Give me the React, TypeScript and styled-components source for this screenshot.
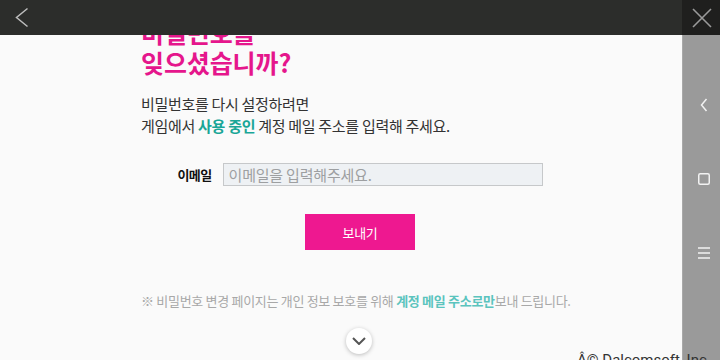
import React from "react";
import styled, { createGlobalStyle } from "styled-components";

const GlobalStyle = createGlobalStyle`
  html, body {
    margin: 0;
    padding: 0;
    overflow: hidden;
    background: #fafafa;
  }
  body {
    font-family: Roboto, "Noto Sans CJK KR", sans-serif;
  }
`;

const App: React.FC = () => {
  return (
    <Screen>
      <GlobalStyle />
      <TopBar>
        <IconButton aria-label="back">
          <svg width="14" height="22" viewBox="0 0 14 22">
            <path d="M12.5 1.5 L1.5 10.5 L12.5 19.5" fill="none" stroke="#bdbdbd" strokeWidth="1.5" />
          </svg>
        </IconButton>
      </TopBar>
      <CloseBox>
        <svg width="20" height="20" viewBox="0 0 20 20">
          <path d="M1 1 L19 19 M19 1 L1 19" fill="none" stroke="#9a9a9a" strokeWidth="1.6" />
        </svg>
      </CloseBox>
      <SideNav>
        <NavKey>
          <svg width="8" height="14" viewBox="0 0 8 14">
            <path d="M6.5 1 L1.5 7 L6.5 13" fill="none" stroke="#f2f2f2" strokeWidth="1.5" />
          </svg>
        </NavKey>
        <NavKey>
          <svg width="12" height="12" viewBox="0 0 12 12">
            <rect x="0.75" y="0.75" width="10.5" height="10.5" rx="1.5" fill="none" stroke="#f2f2f2" strokeWidth="1.5" />
          </svg>
        </NavKey>
        <NavKey>
          <svg width="12" height="12" viewBox="0 0 12 12">
            <path d="M0 1 H12 M0 6 H12 M0 11 H12" fill="none" stroke="#f2f2f2" strokeWidth="1.3" />
          </svg>
        </NavKey>
      </SideNav>
      <Content>
        <Scroller>
          <Panel>
            <Title>
              비밀번호를
              <br />
              잊으셨습니까?
            </Title>
            <Lead>
              비밀번호를 다시 설정하려면
              <br />
              게임에서 <Accent>사용 중인</Accent> 계정 메일 주소를 입력해 주세요.
            </Lead>
            <FieldRow>
              <Label htmlFor="email">이메일</Label>
              <Input id="email" type="email" placeholder="이메일을 입력해주세요." />
            </FieldRow>
            <SendButton>보내기</SendButton>
            <Notice>
              ※ 비밀번호 변경 페이지는 개인 정보 보호를 위해 <NoticeAccent>계정 메일 주소로만</NoticeAccent>보내 드립니다.
            </Notice>
          </Panel>
          <Footer>Â© Dalcomsoft, Inc.</Footer>
        </Scroller>
      </Content>
      <ScrollDown aria-label="scroll down">
        <svg width="14" height="8" viewBox="0 0 14 8">
          <path d="M1 1 L7 7 L13 1" fill="none" stroke="#555" strokeWidth="2" />
        </svg>
      </ScrollDown>
    </Screen>
  );
};

export default App;

const Screen = styled.div`
  width: 720px;
  height: 360px;
  display: grid;
  grid-template-columns: 682px 38px;
  grid-template-rows: 35px 325px;
  background: #fafafa;
`;

const TopBar = styled.header`
  grid-column: 1;
  grid-row: 1;
  background: #2c2d2b;
  display: flex;
  align-items: center;
  padding-left: 15px;
  z-index: 2;
`;

const IconButton = styled.button`
  background: none;
  border: none;
  padding: 0;
  display: flex;
  cursor: pointer;
`;

const CloseBox = styled.div`
  grid-column: 2;
  grid-row: 1;
  background: #1f1f1e;
  display: flex;
  align-items: center;
  justify-content: center;
  padding-left: 1px;
  z-index: 2;
`;

const SideNav = styled.nav`
  grid-column: 2;
  grid-row: 2;
  background: #9a9a9a;
  border-left: 1px solid #a9a9a9;
  display: flex;
  flex-direction: column;
  align-items: center;
  padding-top: 63px;
  gap: 60px;
`;

const NavKey = styled.div`
  width: 14px;
  height: 14px;
  display: flex;
  align-items: center;
  justify-content: center;
  padding-left: 4px;
`;

const Content = styled.main`
  grid-column: 1;
  grid-row: 2;
  overflow-y: clip;
  overflow-x: visible;
`;

const Scroller = styled.div`
  margin-top: -18px;
`;

const Panel = styled.section`
  width: 438px;
  margin-left: 141px;
  display: flex;
  flex-direction: column;
`;

const Title = styled.h1`
  margin: 0;
  font-family: "Noto Sans CJK KR", sans-serif;
  font-size: 25px;
  line-height: 30px;
  font-weight: 700;
  letter-spacing: -0.1px;
  color: #e5168c;
`;

const Lead = styled.p`
  margin: 16px 0 0;
  font-family: "Noto Sans CJK KR", sans-serif;
  font-size: 15px;
  line-height: 22px;
  letter-spacing: -0.3px;
  color: #333;
`;

const Accent = styled.strong`
  color: #1aa697;
  font-weight: 700;
`;

const FieldRow = styled.div`
  margin-top: 26px;
  display: flex;
  align-items: center;
  justify-content: center;
  gap: 11px;
`;

const Label = styled.label`
  font-family: "Noto Sans CJK KR", sans-serif;
  font-size: 13px;
  font-weight: 700;
  letter-spacing: -0.6px;
  color: #111;
`;

const Input = styled.input`
  box-sizing: border-box;
  width: 320px;
  height: 23px;
  margin: 0;
  padding: 0 5px;
  border: 1px solid #c6c8ca;
  background: #eef1f4;
  font-family: "Noto Sans CJK KR", sans-serif;
  font-size: 15px;
  letter-spacing: -0.2px;
  color: #333;
  outline: none;
  &::placeholder {
    color: #9d9fa1;
  }
`;

const SendButton = styled.button`
  align-self: center;
  margin-top: 28px;
  width: 110px;
  height: 36px;
  border: none;
  background: #ee1890;
  color: #fff;
  font-family: "Noto Sans CJK KR", sans-serif;
  font-size: 13px;
  letter-spacing: -0.3px;
  cursor: pointer;
`;

const Notice = styled.p`
  margin: 42px 0 0;
  font-family: "Noto Sans CJK KR", sans-serif;
  font-size: 13px;
  line-height: 18px;
  letter-spacing: -0.3px;
  color: #a8a8a8;
  white-space: nowrap;
`;

const NoticeAccent = styled.span`
  color: #5bc4be;
  font-weight: 700;
`;

const Footer = styled.footer`
  margin: 40px 0 0 577px;
  font-family: Roboto, sans-serif;
  font-size: 15px;
  line-height: 20px;
  color: #333;
  white-space: nowrap;
`;

const ScrollDown = styled.button`
  position: fixed;
  left: 346px;
  top: 328px;
  width: 26px;
  height: 26px;
  border-radius: 50%;
  border: none;
  padding: 0;
  background: #fff;
  box-shadow: 0 1px 4px rgba(0, 0, 0, 0.25);
  display: flex;
  align-items: center;
  justify-content: center;
  cursor: pointer;
`;
